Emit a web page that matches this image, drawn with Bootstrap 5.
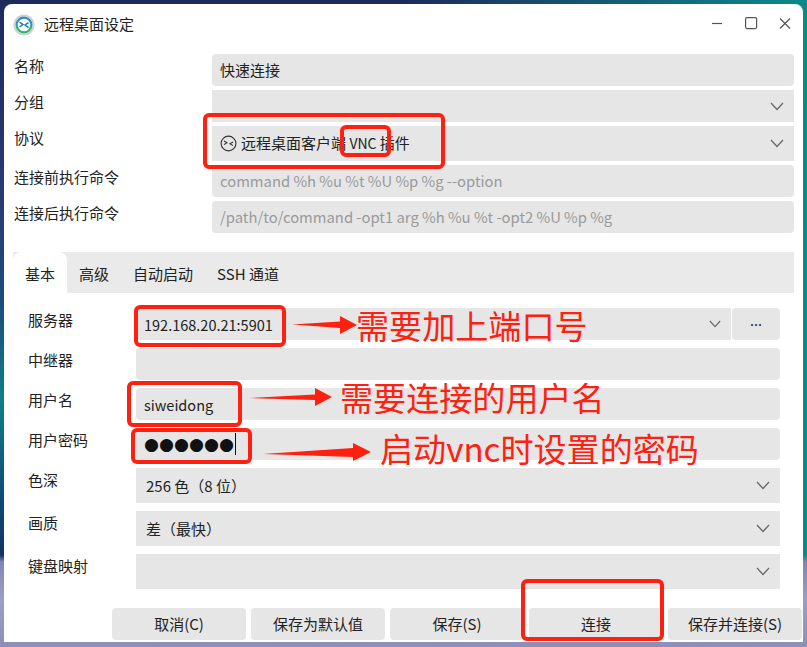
<!DOCTYPE html>
<html lang="zh-CN">
<head>
<meta charset="utf-8">
<title>远程桌面设定</title>
<link href="https://cdn.jsdelivr.net/npm/bootstrap@5.3.0/dist/css/bootstrap.min.css" rel="stylesheet">
<style>
html,body{margin:0;height:647px;overflow:hidden}
body{font-family:"Noto Sans CJK SC","Noto Sans",sans-serif;font-size:15px;color:#222;
 background:
  linear-gradient(180deg,transparent 0,transparent 555px,#7f86b4 562px,#9a9fc4 600px,#8c90b8 647px),
  linear-gradient(90deg,transparent 0,transparent 50%,#0a8a8a 100%),
  linear-gradient(180deg,#1e2a5c 0,#2a3a78 200px,#1c4a7e 300px,#0f7f8a 400px,#0d4a78 500px,#12355f 555px);}
.desk{height:647px;padding:4px 4px 5px 4px}
.dlg{position:relative;background:#fff;height:638px;border-radius:8px 8px 0 0;padding:0 9px 0 9px}
.ttl{height:41px;margin-bottom:9px;font-size:15px}
.ttl .tname{margin-left:9px}
.wctl{position:absolute;top:12px;right:11px;display:flex}
.toprow{display:grid;grid-template-columns:198px 582px;row-gap:4px;margin-left:1px}
.lab{line-height:24px;font-size:15px}
.form-control.fx,.cbx,.btn.btn-light.bx{background:#e6e6e6;border:0;border-radius:4px;color:#222;font-size:15px;box-shadow:none}
.form-control.fx{height:32px;padding:0 8px 2px;display:block}
.form-control.fx.ltn{font-size:14.5px;padding-bottom:0}
.form-control.fx::placeholder{color:#9a9a9a;opacity:1;font-size:14.8px}
.cbx{height:35px;display:flex;align-items:center;padding:0 10px 0 8px;border-radius:0}
.cbx.wide{padding-left:10px}
.cbx.wide .grow{padding-top:2px}
.cbx.sq32{height:32px}
.cbx .grow{flex:1}
.vnc{font-size:14px}
.tabbar.nav{height:41px;background:#eaeaea;border:0;flex-wrap:nowrap}
.tabbar .nav-link{height:41px;padding:10px 12px 0;color:#222;border:0;border-radius:8px 8px 0 0;background:none;font-size:15px;line-height:24px}
.tabbar .nav-link.active{background:#fff;color:#222}
.panel{display:grid;grid-template-columns:108px 644px;row-gap:8px;margin:15px 0 0 15px}
.hflex{display:flex}
.form-control.fx.rb0{border-radius:0;flex:1}
.pwtxt{display:flex;align-items:center}
.dots{font-family:"DejaVu Sans",sans-serif;font-size:17.2px;color:#111;line-height:32px;padding-left:8px}
.caret{width:1px;height:22px;background:#111;margin-left:1px}
.foot{display:flex;gap:5px;position:absolute;left:108px;top:604px}
.btn.btn-light.bx{width:134px;height:32px;padding:0}
.btn.btn-light.bx.more{width:48px;margin-left:1px;font-family:"Noto Sans",sans-serif;line-height:20px}
.mk{position:absolute;border:4px solid #ff2010;border-radius:6px}
.note{position:absolute;color:#ff2010;font-size:33.1px;line-height:40px;white-space:nowrap;font-family:"Noto Sans CJK SC",sans-serif}
.arrows{position:absolute;left:-4px;top:-4px;pointer-events:none}
</style>
</head>
<body>
<div class="desk">
 <div class="dlg">
  <div class="ttl d-flex align-items-center">
   <svg width="22" height="22" viewBox="0 0 22 22">
    <circle cx="11" cy="11" r="10.6" fill="#cfd2d4"/>
    <circle cx="11" cy="11" r="8.6" fill="#fff"/>
    <path d="M3.6 11A7.4 7.4 0 0 1 18.4 11" fill="none" stroke="#2a8fd0" stroke-width="2.2"/>
    <path d="M3.6 11A7.4 7.4 0 0 0 18.4 11" fill="none" stroke="#2cb56a" stroke-width="2.2"/>
    <path d="M6.5 8l3.5 2.6-3.5 2.4M15.5 8.6L12 11l3.5 2.6" fill="none" stroke="#1a7fb0" stroke-width="1.5"/>
   </svg>
   <span class="tname">远程桌面设定</span>
  </div>
  <div class="wctl">
   <svg width="80" height="16" viewBox="0 0 80 16" fill="none" stroke="#555" stroke-width="1.2">
    <path d="M0 7.5H10"/>
    <rect x="33.6" y="1.6" width="11" height="11" rx="1.5"/>
    <path d="M68 2.5L78 12.5M78 2.5L68 12.5"/>
   </svg>
  </div>
  <div class="toprow">
   <div class="lab">名称</div>
   <input class="form-control fx" value="快速连接">
   <div class="lab">分组</div>
   <div class="cbx sq32"><span class="grow"></span><svg width="14" height="9" viewBox="0 0 14 9" fill="none" stroke="#666" stroke-width="1.2"><path d="M1 1l6 6.5L13 1"/></svg></div>
   <div class="lab">协议</div>
   <div class="cbx">
    <svg class="me-1" width="17" height="17" viewBox="0 0 17 17" fill="none" stroke="#333" stroke-width="1.1"><circle cx="8.5" cy="8.5" r="7.4"/><path d="M4 6l3 1.8L4 9.6M13 7l-3 1.8 3 1.8"/></svg>
    <span class="grow">远程桌面客户端 <span class="vnc">VNC</span> 插件</span>
    <svg width="14" height="9" viewBox="0 0 14 9" fill="none" stroke="#666" stroke-width="1.2"><path d="M1 1l6 6.5L13 1"/></svg>
   </div>
   <div class="lab">连接前执行命令</div>
   <input class="form-control fx" placeholder="command %h %u %t %U %p %g --option">
   <div class="lab">连接后执行命令</div>
   <input class="form-control fx" placeholder="/path/to/command -opt1 arg %h %u %t -opt2 %U %p %g">
  </div>
  <ul class="nav tabbar" style="margin-top:19px">
   <li class="nav-item"><a class="nav-link active" href="#">基本</a></li>
   <li class="nav-item"><a class="nav-link" href="#">高级</a></li>
   <li class="nav-item"><a class="nav-link" href="#">自动启动</a></li>
   <li class="nav-item"><a class="nav-link" href="#">SSH 通道</a></li>
  </ul>
  <div class="panel">
   <div class="lab">服务器</div>
   <div class="hflex">
    <input class="form-control fx ltn rb0" value="192.168.20.21:5901">
    <div class="cbx sq32" style="padding:0 10px 0 0"><svg width="12" height="8" viewBox="0 0 14 9" fill="none" stroke="#666" stroke-width="1.3"><path d="M1 1l6 6.5L13 1"/></svg></div>
    <button class="btn btn-light bx more">···</button>
   </div>
   <div class="lab">中继器</div>
   <input class="form-control fx">
   <div class="lab">用户名</div>
   <input class="form-control fx ltn" value="siweidong">
   <div class="lab">用户密码</div>
   <div class="cbx sq32 pwtxt" style="padding:0;border-radius:4px"><span class="dots">●●●●●●</span><span class="caret"></span></div>
   <div class="lab">色深</div>
   <div class="cbx wide"><span class="grow">256 色（8 位）</span><svg width="14" height="9" viewBox="0 0 14 9" fill="none" stroke="#666" stroke-width="1.2"><path d="M1 1l6 6.5L13 1"/></svg></div>
   <div class="lab">画质</div>
   <div class="cbx wide"><span class="grow">差（最快）</span><svg width="14" height="9" viewBox="0 0 14 9" fill="none" stroke="#666" stroke-width="1.2"><path d="M1 1l6 6.5L13 1"/></svg></div>
   <div class="lab">键盘映射</div>
   <div class="cbx wide"><span class="grow"></span><svg width="14" height="9" viewBox="0 0 14 9" fill="none" stroke="#666" stroke-width="1.2"><path d="M1 1l6 6.5L13 1"/></svg></div>
  </div>
  <div class="foot">
   <button class="btn btn-light bx">取消(C)</button>
   <button class="btn btn-light bx">保存为默认值</button>
   <button class="btn btn-light bx">保存(S)</button>
   <button class="btn btn-light bx">连接</button>
   <button class="btn btn-light bx">保存并连接(S)</button>
  </div>

  <div class="mk" style="left:199px;top:109px;width:242px;height:56px"></div>
  <div class="mk" style="left:336px;top:121px;width:51px;height:32px"></div>
  <div class="mk" style="left:130px;top:301px;width:152px;height:42px"></div>
  <div class="mk" style="left:123px;top:377px;width:115px;height:46px"></div>
  <div class="mk" style="left:127px;top:424px;width:121px;height:36px"></div>
  <div class="mk" style="left:517px;top:575px;width:143px;height:62px"></div>
  <svg class="arrows" width="807" height="647" viewBox="0 0 807 647" fill="#ff2010">
   <path d="M292 324.5L340 321.5V316L357 325L340 334V328Z"/>
   <path d="M249 398L315 394.5V388L332 397L315 406V400Z"/>
   <path d="M263 454L353 448V443L371 452L353 461V457Z"/>
  </svg>
  <div class="note" style="left:352px;top:301px">需要加上端口号</div>
  <div class="note" style="left:336px;top:373px">需要连接的用户名</div>
  <div class="note" style="left:376px;top:424px">启动vnc时设置的密码</div>
 </div>
</div>
<script src="https://cdn.jsdelivr.net/npm/bootstrap@5.3.0/dist/js/bootstrap.bundle.min.js"></script>
</body>
</html>
